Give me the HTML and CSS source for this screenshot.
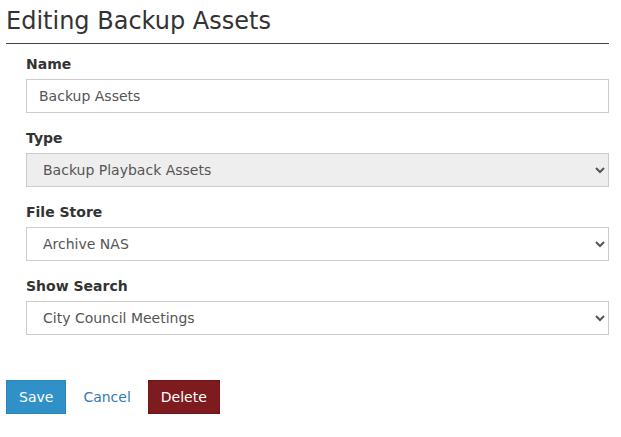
FILE: index.html
```html
<!DOCTYPE html>
<html lang="en">
<head>
<meta charset="utf-8">
<title>Editing Backup Assets</title>
<link rel="stylesheet" href="styles.css">
</head>
<body>
<div class="page">
  <h1 class="title">Editing Backup Assets</h1>
  <form class="form">
    <div class="group">
      <label class="label" for="name">Name</label>
      <input class="control" id="name" type="text" value="Backup Assets">
    </div>
    <div class="group">
      <label class="label" for="type">Type</label>
      <select class="control control-readonly" id="type">
        <option>Backup Playback Assets</option>
      </select>
    </div>
    <div class="group">
      <label class="label" for="store">File Store</label>
      <select class="control" id="store">
        <option>Archive NAS</option>
      </select>
    </div>
    <div class="group">
      <label class="label" for="search">Show Search</label>
      <select class="control" id="search">
        <option>City Council Meetings</option>
      </select>
    </div>
  </form>
  <div class="actions">
    <button class="btn btn-save" type="button">Save</button>
    <a class="btn btn-link" href="#">Cancel</a>
    <button class="btn btn-delete" type="button">Delete</button>
  </div>
</div>
</body>
</html>
```

FILE: styles.css
```css
html, body {
  margin: 0;
  padding: 0;
  background: #fff;
}

body {
  font-family: "DejaVu Sans", Verdana, sans-serif;
  font-size: 14px;
  line-height: 20px;
  color: #333;
}

.page {
  padding: 7px 12px 0 6px;
}

.title {
  margin: 0;
  padding: 0 0 8px 0;
  font-size: 24px;
  font-weight: normal;
  line-height: 28px;
  color: #333;
  border-bottom: 1px solid #444;
}

.form {
  margin: 10px 0 0 0;
  padding: 0 0 0 20px;
  display: flex;
  flex-direction: column;
  gap: 15px;
}

.group {
  display: flex;
  flex-direction: column;
}

.label {
  display: block;
  font-weight: bold;
  line-height: 20px;
  margin-bottom: 5px;
  color: #333;
}

.control {
  box-sizing: border-box;
  width: 100%;
  height: 34px;
  margin: 0;
  padding: 6px 12px;
  font-family: inherit;
  font-size: 14px;
  line-height: 20px;
  color: #555;
  background: #fff;
  border: 1px solid #ccc;
  border-radius: 0;
  outline: none;
}

.control-readonly {
  background: #eee;
}

.actions {
  margin-top: 45px;
  display: flex;
  align-items: center;
  gap: 4px;
}

.btn {
  box-sizing: border-box;
  display: inline-block;
  height: 34px;
  margin: 0;
  padding: 6px 12px;
  font-family: inherit;
  font-size: 14px;
  line-height: 20px;
  border: 1px solid transparent;
  border-radius: 0;
  text-decoration: none;
  cursor: pointer;
}

.btn-save {
  background: #3091c8;
  border-color: #2b85b8;
  color: #fff;
}

.btn-link {
  background: transparent;
  color: #337ab7;
}

.btn-delete {
  background: #7e1b1e;
  border-color: #6e1518;
  color: #fff;
}
```
